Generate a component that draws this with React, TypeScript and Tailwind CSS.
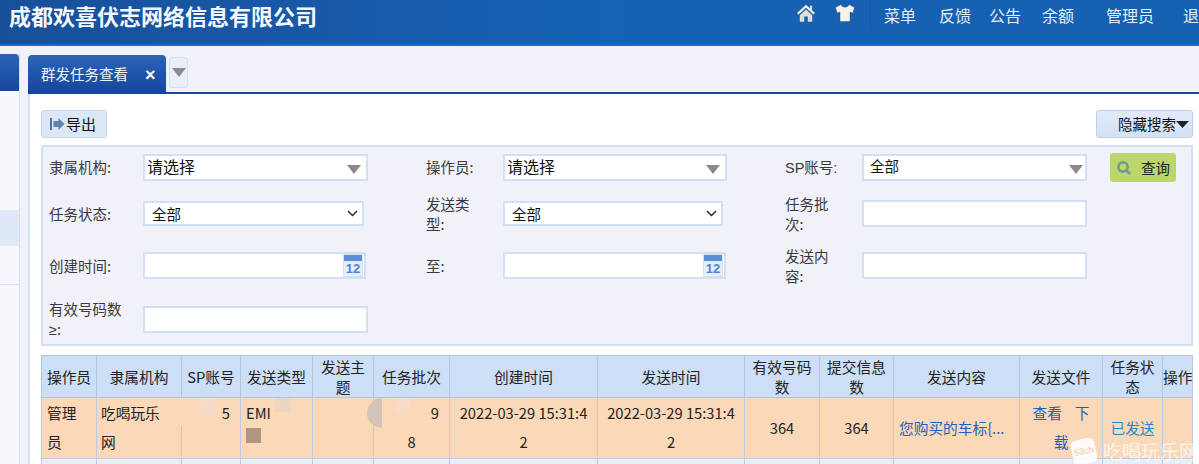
const font = { fontFamily: '"Noto Sans CJK SC", "Liberation Sans", sans-serif' };

function Home() {
  return (
    <svg width="20" height="20" viewBox="0 0 20 20">
      <path d="M10 1.5 L0.8 10 L2.6 11.8 L10 5 L17.4 11.8 L19.2 10 L16.2 7.2 V2.5 H13.8 V5 Z" fill="#efefec" stroke="#3a4a5c" strokeWidth="0.4" />
      <path d="M10 6.6 L3.8 12.2 V18.8 H8.2 V13.6 H11.8 V18.8 H16.2 V12.2 Z" fill="#dededa" />
    </svg>
  );
}

function Shirt() {
  return (
    <svg width="20" height="20" viewBox="0 0 20 20">
      <path d="M6 1.5 L0.5 4.5 L2.2 10 L5 9 V18.5 H15 V9 L17.8 10 L19.5 4.5 L14 1.5 C13 5 7 5 6 1.5 Z" fill="#f4f4ef" stroke="#3a4a5c" strokeWidth="0.4" />
    </svg>
  );
}

function Arrow({ className }: { className: string }) {
  return (
    <svg className={className} width="14" height="9" viewBox="0 0 14 9">
      <path d="M0 0 H14 L7 9 Z" fill="#8a8a8a" />
    </svg>
  );
}

function Chevron() {
  return (
    <svg width="11" height="7" viewBox="0 0 11 7">
      <path d="M1 1 L5.5 5.5 L10 1" fill="none" stroke="#222" strokeWidth="1.4" />
    </svg>
  );
}

function Calendar() {
  return (
    <span className="absolute right-[1px] top-0 flex h-[23px] w-[20px] flex-col border border-[#d3dff2] bg-[#e6eefa]">
      <span className="h-[6px] bg-[#5b8dd8]" />
      <span className="text-center text-[13px] leading-[15px] font-bold text-[#4f86d6]" style={{ fontFamily: '"Liberation Sans", sans-serif' }}>12</span>
    </span>
  );
}

function Label({ children }: { children: React.ReactNode }) {
  return <div className="text-[14.5px] leading-[20px] text-[#3a3a3a]">{children}</div>;
}

function Combo({ w = "w-full" }: { w?: string }) {
  return (
    <div className={`relative flex h-[27px] items-center border-2 border-[#d3dff2] bg-white pl-[2px] pb-[3px] text-[16px] text-[#111] ${w}`}>
      请选择
      <Arrow className="absolute right-[5px] top-[9px]" />
    </div>
  );
}

function Select({ w }: { w: string }) {
  return (
    <div className={`flex h-[25px] items-center justify-between border-2 border-[#d3dff2] bg-white pl-[7px] pr-[4px] text-[14.5px] text-[#111] ${w}`}>
      全部
      <Chevron />
    </div>
  );
}

function Input({ cal = false, w = "w-full", h = "h-[27px]" }: { cal?: boolean; w?: string; h?: string }) {
  return (
    <div className={`relative border-2 border-[#d3dff2] bg-white ${w} ${h}`}>{cal && <Calendar />}</div>
  );
}

const cols = [55, 85, 59, 72, 61, 76, 148, 147, 75, 74, 126, 83, 60, 30];
const heads = ["操作员", "隶属机构", "SP账号", "发送类型", "发送主题", "任务批次", "创建时间", "发送时间", "有效号码数", "提交信息数", "发送内容", "发送文件", "任务状态", "操作"];

export default function App() {
  const td = "border border-[#bccbe4] pt-0 pb-[2px] align-middle";
  return (
    <div className="relative h-[464px] w-[1199px] overflow-hidden bg-[#f1f1f9]" style={font}>
      <header className="flex h-[46px] items-start justify-between border-b-2 border-[#1a6cc0] bg-gradient-to-r from-[#184f99] via-[#1762b4] to-[#1560b0] pl-[9px]">
        <h1 className="pt-[2px] text-[22px] leading-[26px] font-bold whitespace-nowrap text-[#f4f7fb]">成都欢喜伏志网络信息有限公司</h1>
        <nav className="flex h-[30px] w-[404px] shrink-0 items-center text-[16px] whitespace-nowrap text-[#e6eef8]">
          <span className="ml-[1px] mb-[4px]"><Home /></span>
          <span className="ml-[19px] mb-[4px]"><Shirt /></span>
          <span className="ml-[15px] h-[30px] w-px bg-[#1a569f]" />
          <span className="ml-[13px]">菜单</span>
          <span className="ml-[23px]">反馈</span>
          <span className="ml-[18px]">公告</span>
          <span className="ml-[21px]">余额</span>
          <span className="ml-[32px]">管理员</span>
          <span className="ml-[29px]">退</span>
        </nav>
      </header>

      <div className="flex h-[418px] pt-[8px]">
        <aside className="flex w-[20px] shrink-0 flex-col border-r border-[#d5dff1]">
          <div className="h-[37px] rounded-tr-[4px] bg-gradient-to-b from-[#2b65b8] to-[#15479c]" />
          <div className="flex-1 bg-[#f8f8fc] pt-[119px]">
            <div className="h-[36px] bg-[#dfe8f6]" />
            <div className="mt-[38px] h-px bg-[#d3dff2]" />
          </div>
        </aside>

        <main className="ml-[8px] flex min-w-0 flex-1 flex-col pt-[1px]">
          <div className="flex h-[39px] shrink-0 items-start border-b-2 border-[#15479c]">
            <div className="flex h-[37px] w-[138px] items-center rounded-t-[4px] bg-gradient-to-b from-[#2b65b8] to-[#15479c] pl-[13px] text-[14.5px] text-[#eef3fa]">
              群发任务查看
              <span className="ml-[17px] pt-[2px] text-[18px] leading-none font-bold text-white" style={{ fontFamily: '"Liberation Sans", sans-serif' }}>×</span>
            </div>
            <div className="ml-[3px] mt-[2px] flex h-[31px] w-[19px] items-start justify-center rounded-[3px] border border-[#d3dff2] bg-[#e8eef8] pt-[10px]">
              <Arrow className="" />
            </div>
          </div>

          <div className="flex flex-1 flex-col border-l-2 border-[#d3dff2] bg-white pl-[11px] pr-[6px] pt-[16px]">
            <div className="flex justify-between">
              <button className="flex h-[28px] w-[66px] items-center rounded-[3px] border border-[#c5d6ee] bg-[#dce7f6] pl-[8px] text-[15px] text-[#111]">
                <svg width="15" height="14" viewBox="0 0 15 14" className="mr-[1px]">
                  <rect x="0" y="1" width="2" height="12" fill="#4f6f98" />
                  <path d="M3.5 4 H8.5 V1 L14.5 7 L8.5 13 V10 H3.5 Z" fill="#5f82ad" />
                </svg>
                导出
              </button>
              <button className="flex h-[28px] w-[97px] items-center justify-end rounded-[3px] border border-[#bcd0ec] bg-gradient-to-b from-[#e0eafa] to-[#d3e1f5] pr-[3px] text-[14.5px] text-[#111]">
                隐藏搜索
                <svg width="13" height="7" viewBox="0 0 13 7"><path d="M0 0 H13 L6.5 7 Z" fill="#222" /></svg>
              </button>
            </div>

            <div className="mt-[7px] grid h-[201px] shrink-0 grid-cols-[94px_225px_58px_77px_224px_58px_77px_225px_23px_66px] grid-rows-[44px_45px_59px_48px] items-center border-2 border-[#d3dff2] bg-[#f1f1f9] pl-[6px]">
              <div className="col-start-1 row-start-1 self-start pt-[10px]"><Label>隶属机构:</Label></div>
              <div className="col-start-2 row-start-1 self-start pt-[7px]"><Combo /></div>
              <div className="col-start-4 row-start-1 self-start pt-[10px]"><Label>操作员:</Label></div>
              <div className="col-start-5 row-start-1 self-start pt-[7px]"><Combo /></div>
              <div className="col-start-7 row-start-1 self-start pt-[10px]"><Label><span style={{ fontFamily: '"Liberation Sans", "Noto Sans CJK SC", sans-serif' }}>SP账号:</span></Label></div>
              <div className="col-start-8 row-start-1 self-start pt-[7px]">
                <div className="relative flex h-[27px] items-center border-2 border-[#d3dff2] bg-white pb-[3px] pl-[6px] text-[14.5px] text-[#111]">全部<Arrow className="absolute right-[2px] top-[9px]" /></div>
              </div>
              <div className="col-start-10 row-start-1 self-start pt-[6px]">
                <button className="flex h-[29px] w-[66px] items-center rounded-[3px] bg-[#bcd66e] pl-[6px] text-[14.5px] text-[#222]">
                  <svg width="16" height="16" viewBox="0 0 16 16">
                    <circle cx="7" cy="7" r="4.6" fill="none" stroke="#6f9a8c" strokeWidth="2.6" />
                    <path d="M10.5 10.5 L14 14" stroke="#6f9a8c" strokeWidth="3" />
                  </svg>
                  <span className="ml-[9px]">查询</span>
                </button>
              </div>

              <div className="col-start-1 row-start-2"><Label>任务状态:</Label></div>
              <div className="col-start-2 row-start-2"><Select w="w-[221px]" /></div>
              <div className="col-start-4 row-start-2"><Label>发送类<br />型:</Label></div>
              <div className="col-start-5 row-start-2"><Select w="w-[220px]" /></div>
              <div className="col-start-7 row-start-2"><Label>任务批<br />次:</Label></div>
              <div className="col-start-8 row-start-2"><Input /></div>

              <div className="col-start-1 row-start-3"><Label>创建时间:</Label></div>
              <div className="col-start-2 row-start-3"><Input cal w="w-[223px]" /></div>
              <div className="col-start-4 row-start-3"><Label>至:</Label></div>
              <div className="col-start-5 row-start-3"><Input cal w="w-[223px]" /></div>
              <div className="col-start-7 row-start-3"><Label>发送内<br />容:</Label></div>
              <div className="col-start-8 row-start-3"><Input /></div>

              <div className="col-start-1 row-start-4"><Label>有效号码数<br /><span style={{ fontFamily: '"Liberation Sans", sans-serif' }}>≥</span>:</Label></div>
              <div className="col-start-2 row-start-4"><Input /></div>
            </div>

            <table className="mt-[9px] w-[1152px] shrink-0 table-fixed border-collapse text-[14.7px] text-[#222]">
              <colgroup>
                {cols.map((c, i) => <col key={i} style={{ width: c }} />)}
              </colgroup>
              <thead>
                <tr className="h-[42px] bg-[#cddff6]">
                  {heads.map((h) => (
                    <th key={h} className="border border-[#b5c4dc] px-[3px] py-0 text-center leading-[20px] font-normal">
                      {h.startsWith("SP") || h === "操作" ? <span className="-mx-[3px] whitespace-nowrap">{h}</span> : h}
                    </th>
                  ))}
                </tr>
              </thead>
              <tbody>
                <tr className="h-[60px] bg-[#fbd8b8] leading-[29px]">
                  <td className={`${td} pl-[5px] pr-[8px]`}>管理员</td>
                  <td className={`${td} pl-[4px] pr-[11px]`}>吃喝玩乐网</td>
                  <td className={`${td} relative pr-[10px] text-right align-top`}>
                    <span className="absolute -left-[2px] top-0 h-[28px] w-[28px] bg-[#fbd8b8]" />
                    <span className="absolute left-[18px] top-0 h-[16px] w-[15px] bg-[#f4dcc8]" />
                    <span className="relative">5</span>
                  </td>
                  <td className={`${td} relative px-[5px] align-top`}>
                    EMI
                    <span className="absolute left-[5px] top-[30px] h-[15px] w-[15px] bg-[#b09680]" />
                    <span className="absolute left-[34px] top-0 h-[14px] w-[16px] bg-[#ecd6c2]" />
                  </td>
                  <td className={td}></td>
                  <td className={`${td} relative pr-[10px]`}>
                    <div className="text-right">9</div>
                    <div className="pl-[10px] text-center">8</div>
                    <span className="absolute -left-[7px] top-0 h-[30px] w-[15px] rounded-l-full bg-[#d3c6b8]" />
                    <span className="absolute left-[22px] top-0 h-[14px] w-[14px] bg-[#f4dcc8]" />
                  </td>
                  <td className={`${td} px-[8px] text-center break-all`}>2022-03-29 15:31:42</td>
                  <td className={`${td} px-[8px] text-center break-all`}>2022-03-29 15:31:42</td>
                  <td className={`${td} text-center`}>364</td>
                  <td className={`${td} text-center`}>364</td>
                  <td className={`${td} truncate px-[5px] text-[#1f5fbf]`}>您购买的车标{"{"}...</td>
                  <td className={`${td} text-center text-[#1a5cc0]`}>查看<span className="ml-[13px]">下</span><br />载</td>
                  <td className={`${td} text-center text-[#1f86d0]`}>已发送</td>
                  <td className={td}></td>
                </tr>
                <tr className="h-[10px] bg-[#e8effb]">
                  {cols.map((_, i) => <td key={i} className="border border-[#bccbe4]" />)}
                </tr>
              </tbody>
            </table>
          </div>
        </main>
      </div>

      <div className="absolute bottom-[-1px] right-[1px] flex items-center text-[19px] leading-[28px] text-white/75">
        <span className="mr-[7px] flex h-[25px] w-[24px] rotate-[-12deg] items-center justify-center rounded-[6px] bg-white/90 text-[9px] leading-none text-[#e9c9a8]" style={{ fontFamily: '"Liberation Sans", sans-serif' }}>53ch</span>
        吃喝玩乐网
      </div>
    </div>
  );
}
